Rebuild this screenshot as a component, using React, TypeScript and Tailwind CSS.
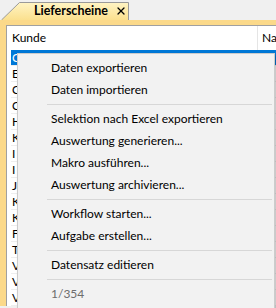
import { X } from "lucide-react";

const rows = ["C", "E", "C", "C", "H", "K", "I", "I", "J", "K", "K", "F", "T", "V", "V", "V"];

type Entry = { label: string } | "sep";

const menu: Entry[] = [
  { label: "Daten exportieren" },
  { label: "Daten importieren" },
  "sep",
  { label: "Selektion nach Excel exportieren" },
  { label: "Auswertung generieren..." },
  { label: "Makro ausführen..." },
  { label: "Auswertung archivieren..." },
  "sep",
  { label: "Workflow starten..." },
  { label: "Aufgabe erstellen..." },
  "sep",
  { label: "Datensatz editieren" },
  "sep",
];

export default function App() {
  return (
    <div
      className="relative h-[308px] w-[276px] overflow-hidden bg-[#f0f0f0] text-[12px] text-black"
      style={{ fontFamily: 'Lato, "Liberation Sans", sans-serif' }}
    >
      {/* tab strip */}
      <div className="flex h-[20px] items-end pl-[1px] pt-[2px]">
        <div className="relative flex h-[18px] w-[128px] items-center">
          <svg className="absolute inset-0" width="128" height="18" viewBox="0 0 128 18">
            <defs>
              <linearGradient id="tabfill" x1="0" y1="0" x2="0" y2="1">
                <stop offset="0" stopColor="#fff4c4" />
                <stop offset="1" stopColor="#fbe08e" />
              </linearGradient>
            </defs>
            <path d="M0.5 18 L18.5 0.5 L127.5 0.5 L127.5 18" fill="url(#tabfill)" stroke="#9a9a9a" strokeWidth="1" />
          </svg>
          <span className="relative ml-[33px] text-[12.5px] font-bold">Lieferscheine</span>
          <X className="relative ml-[7px] h-[12px] w-[12px]" strokeWidth={2.6} />
        </div>
      </div>
      {/* yellow frame */}
      <div className="h-[5px] bg-[#fbd98a]" />
      <div className="flex">
        <div className="w-[6px] shrink-0 bg-[#fbd98a]" />
        <div className="flex-1 border-l border-t border-[#a0a0a0] bg-white pl-[4px]">
          <div className="flex h-[24px] items-center">
            <span className="w-[246px] shrink-0 pl-[1px]">Kunde</span>
            <span className="h-[24px] border-l border-[#e5e5e5] pl-[4px] leading-[24px]">Na</span>
          </div>
          <div className="flex flex-col">
            {rows.map((r, i) => (
              <div
                key={i}
                className={`flex h-[16px] items-center border-b border-[#eeeeee] pl-[1px] leading-none ${
                  i === 0 ? "bg-[#0078d7] text-white" : ""
                }`}
              >
                {r}
              </div>
            ))}
          </div>
        </div>
      </div>

      {/* context menu */}
      <div className="absolute left-[17px] top-[53px] w-[258px] border border-[#cccccc] bg-[#f2f2f2] py-[3px] shadow-[2px_2px_3px_rgba(0,0,0,0.25)]">
        {menu.map((e, i) =>
          e === "sep" ? (
            <div key={i} className="flex h-[7px] items-center pl-[29px] pr-[2px]">
              <div className="h-px w-full bg-[#d7d7d7]" />
            </div>
          ) : (
            <div key={i} className="flex h-[22px] items-center pl-[33px]">
              {e.label}
            </div>
          )
        )}
        <div className="flex h-[22px] items-center pl-[33px] text-[#6d6d6d]">1/354</div>
      </div>
    </div>
  );
}
